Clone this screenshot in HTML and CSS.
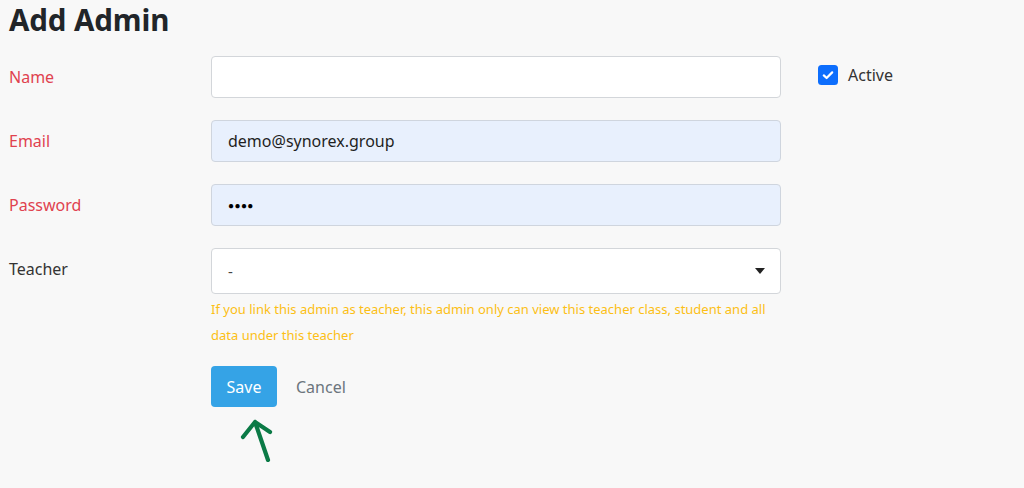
FILE: index.html
```html
<!DOCTYPE html>
<html lang="en">
<head>
<meta charset="utf-8">
<title>Add Admin</title>
<link rel="stylesheet" href="styles.css">
</head>
<body>
<div class="page">
  <h1 class="title">Add Admin</h1>
  <form class="form">
    <div class="row">
      <label class="label req">Name</label>
      <div class="field"><div class="input"></div></div>
      <div class="side">
        <span class="check"><svg viewBox="0 0 20 20" width="20" height="20"><rect x="0" y="0" width="20" height="20" rx="3.5" fill="#0d6efd"/><path d="M5.8 10.4 L8.6 13 L14.2 7.4" fill="none" stroke="#fff" stroke-width="2.2" stroke-linecap="round" stroke-linejoin="round"/></svg></span>
        <span class="check-label">Active</span>
      </div>
    </div>
    <div class="row">
      <label class="label req">Email</label>
      <div class="field"><div class="input filled">demo@synorex.group</div></div>
    </div>
    <div class="row">
      <label class="label req">Password</label>
      <div class="field"><div class="input filled dots">●●●●</div></div>
    </div>
    <div class="row">
      <label class="label top">Teacher</label>
      <div class="field">
        <div class="select"><span>-</span><svg class="caret" viewBox="0 0 10 6" width="10" height="6"><path d="M0 0 H10 L5 6 Z" fill="#222"/></svg></div>
        <p class="help">If you link this admin as teacher, this admin only can view this teacher class, student and all data under this teacher</p>
      </div>
    </div>
    <div class="row actions">
      <span></span>
      <div class="buttons">
        <button type="button" class="btn-save">Save</button>
        <button type="button" class="btn-cancel">Cancel</button>
      </div>
    </div>
  </form>
  <svg class="arrow" viewBox="0 0 40 50" width="40" height="50"><path d="M28 48 L15 10 M3 25 L15 10 L30 20" fill="none" stroke="#0b7a46" stroke-width="4.2" stroke-linecap="round" stroke-linejoin="round"/></svg>
</div>
</body>
</html>
```
FILE: styles.css
```css
html, body {
  margin: 0;
  padding: 0;
  background: #f8f8f8;
  font-family: "Noto Sans", "Open Sans", sans-serif;
  color: #212529;
}
.page {
  position: relative;
  width: 1024px;
  height: 488px;
  padding: 0 9px;
  box-sizing: border-box;
  overflow: hidden;
}
.title {
  margin: 0;
  padding: 0;
  font-size: 29.5px;
  line-height: 40px;
  font-weight: 700;
  color: #212529;
  letter-spacing: -0.1px;
}
.form {
  margin-top: 16px;
  display: flex;
  flex-direction: column;
  gap: 22px;
}
.row {
  display: grid;
  grid-template-columns: 202px 570px auto;
  align-items: start;
}
.label {
  font-size: 16px;
  line-height: 42px;
  color: #333;
}
.label.req { color: #e0424f; }
.label.top { line-height: 42px; }
.input {
  height: 42px;
  box-sizing: border-box;
  border: 1px solid #d3d6da;
  border-radius: 4px;
  background: #fff;
  padding: 0 16px;
  font-size: 16px;
  line-height: 40px;
  color: #1f1f1f;
}
.input.filled { background: #e8f0fd; border-color: #cfd5de; }
.input.dots { font-size: 10px; letter-spacing: 0.4px; color: #000; line-height: 40px; }
.side {
  display: flex;
  align-items: center;
  gap: 10px;
  padding-left: 37px;
  height: 37px;
}
.check { display: flex; width: 20px; height: 20px; }
.check-label { font-size: 16px; color: #333; }
.select {
  height: 46px;
  box-sizing: border-box;
  border: 1px solid #d3d6da;
  border-radius: 4px;
  background: #fff;
  padding: 0 15px 0 16px;
  display: flex;
  align-items: center;
  justify-content: space-between;
  font-size: 15px;
  color: #444;
}
.help {
  margin: 2px 0 0;
  font-size: 13px;
  line-height: 26px;
  color: #fcbf15;
}
.actions { margin-top: -4px; }
.buttons { display: flex; align-items: center; gap: 19px; }
.btn-save {
  width: 66px;
  height: 41px;
  border: none;
  border-radius: 4px;
  background: #35a3e6;
  color: #fff;
  font-family: inherit;
  font-size: 16px;
  padding: 0;
}
.btn-cancel {
  border: none;
  background: none;
  padding: 0;
  font-family: inherit;
  font-size: 16px;
  color: #6c757d;
}
.arrow {
  position: absolute;
  left: 240px;
  top: 412px;
}
```
